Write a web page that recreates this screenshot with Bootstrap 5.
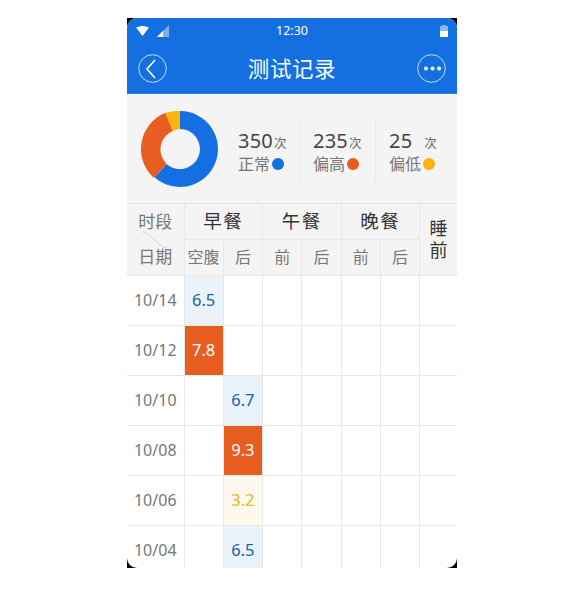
<!DOCTYPE html>
<html lang="zh">
<head>
  <meta charset="utf-8"/>
  <title>测试记录</title>
  <link href="https://cdn.jsdelivr.net/npm/bootstrap@5.3.0/dist/css/bootstrap.min.css" rel="stylesheet"/>
  <style>
    body { background: #fff; font-family: "Noto Sans", "Noto Sans CJK SC", sans-serif; color: #777; }
    .page-wrap { padding: 18px 0 0 127px; }
    .phone { width: 330px; height: 550px; background: #000; overflow: hidden; position: relative; }
    .phone-inner { height: 550px; background: #fff; border-radius: 10px; overflow: hidden; }
    .app-head { background: #1470e0; height: 76px; color: #fff; border-bottom: 1px solid #2a7fe6; }
    .status-bar { height: 26px; padding: 0 9px; }
    .status-side { width: 60px; }
    .status-time { font-size: 12.5px; }
    .title-bar { height: 50px; padding: 0 11px; }
    .title-text { font-size: 21.5px; letter-spacing: .6px; }
    .round-btn { width: 29px; height: 29px; margin-top: -1px; }
    .summary { height: 110px; background: #f4f4f4; border-bottom: 1px solid #e4e4e4; padding-left: 14px; }
    .stat { width: 76px; height: 64px; padding: 11px 0 0 13px; margin-top: 2px; }
    .stat-first { width: 61px; margin-left: 19px; padding-left: 0; }
    .stat-mid { border-left: 1px solid #ececec; }
    .stat-num { font-size: 20px; line-height: 24px; color: #444; letter-spacing: .2px; }
    .stat-unit { font-size: 12.5px; color: #666; margin-left: 1px; }
    .stat-gap { margin-left: 12px; }
    .stat-lab { font-size: 16px; line-height: 22px; color: #777; margin-top: -3px; }
    .dot-mark { width: 12px; height: 12px; border-radius: 50%; margin-left: 2px; }
    .c-blue { background: #1470e0; }
    .c-red { background: #e85d20; }
    .c-yellow { background: #fdb40a; }
    .log-table { table-layout: fixed; width: 330px; border-collapse: collapse; margin: 0; }
    .log-table td, .log-table th { border: 1px solid #e8e8e8; padding: 0; text-align: center; vertical-align: middle; font-weight: 400; }
    .log-table tr > :first-child { border-left: 0; }
    .log-table tr > :last-child { border-right: 0; }
    .log-table thead th { background: #f4f4f4; }
    .log-table thead tr:first-child th { border-top: 0; height: 35px; }
    .log-table thead tr:nth-child(2) th { height: 36px; font-size: 16px; color: #777; }
    .meal-head { font-size: 18.5px; color: #333; letter-spacing: 1.5px; }
    .sleep-head { font-size: 18px; line-height: 22px; color: #333; padding-bottom: 0 !important; }
    .corner-cell { position: relative; font-size: 17px; color: #777; }
    .corner-top { position: absolute; left: 0; right: 0; top: 6px; line-height: 24px; }
    .corner-bot { position: absolute; left: 0; right: 0; top: 41px; line-height: 24px; }
    .corner-line { position: absolute; left: 0; top: 0; }
    .log-table tbody td { height: 50px; font-size: 16.5px; color: #1b62a8; }
    .log-table tbody td:first-child { color: #777; font-size: 16px; }
    .cell-blue { background: #eaf2fa; }
    .cell-red { background: #e85d20; color: #fff !important; }
    .cell-yellow { background: #fdf9ee; color: #eeb524 !important; }
  </style>
</head>
<body>
  <div class="page-wrap">
    <div class="phone">
      <div class="phone-inner">

        <div class="app-head">
          <div class="status-bar d-flex align-items-center justify-content-between">
            <div class="status-side d-flex align-items-center gap-2">
              <svg width="13" height="10" viewBox="0 0 13 10"><path d="M0 1.500Q6.500-1.500 13 1.500L6.500 10z" fill="#fff"/></svg>
              <svg width="12" height="12" viewBox="0 0 12 12"><path d="M0 12L12 0V12z" fill="#fff" opacity=".45"/><path d="M0 12L6 6V12z" fill="#fff"/></svg>
            </div>
            <span class="status-time">12:30</span>
            <div class="status-side d-flex justify-content-end">
              <svg width="8" height="12" viewBox="0 0 8 12"><path d="M2 0H6V1H8V12H0V1H2z" fill="#fff" opacity=".5"/><path d="M0 6H8V12H0z" fill="#fff"/></svg>
            </div>
          </div>
          <div class="title-bar d-flex align-items-center justify-content-between">
            <svg class="round-btn" viewBox="0 0 29 29" fill="none" stroke="#fff"><circle cx="14.500" cy="14.500" r="13.800" opacity=".75"/><path d="M17 6L9 15L17 24" stroke-width="1.600"/></svg>
            <span class="title-text">测试记录</span>
            <svg class="round-btn" viewBox="0 0 29 29" fill="none" stroke="#fff"><circle cx="14.500" cy="14.500" r="13.800" opacity=".75"/><g fill="#fff" stroke="none"><circle cx="9" cy="14.500" r="2"/><circle cx="15.500" cy="14.500" r="2"/><circle cx="22" cy="14.500" r="2"/></g></svg>
          </div>
        </div>

        <div class="summary d-flex align-items-center">
          <svg class="flex-shrink-0" width="78" height="78" viewBox="-39 -39 78 78">
            <path d="M0-38A38 38 0 1 1-25.400 28.300L-13.400 14.900A20 20 0 1 0 0-20z" fill="#1470e0"/>
            <path d="M-26.100 29A39 39 0 0 1-14.500-36.200L-7.200-18A20 20 0 0 0-13.400 14.900z" fill="#e85d20"/>
            <path d="M-14.500-36.200A38 38 0 0 1 0-38V-20A20 20 0 0 0-7.200-18z" fill="#fdb40a"/>
          </svg>
          <div class="stat stat-first">
            <div class="stat-num">350<span class="stat-unit">次</span></div>
            <div class="stat-lab d-flex align-items-center">正常<span class="dot-mark c-blue"></span></div>
          </div>
          <div class="stat stat-mid">
            <div class="stat-num">235<span class="stat-unit">次</span></div>
            <div class="stat-lab d-flex align-items-center">偏高<span class="dot-mark c-red"></span></div>
          </div>
          <div class="stat stat-mid">
            <div class="stat-num">25<span class="stat-unit stat-gap">次</span></div>
            <div class="stat-lab d-flex align-items-center">偏低<span class="dot-mark c-yellow"></span></div>
          </div>
        </div>

        <table class="log-table">
          <colgroup>
            <col style="width:57px"><col style="width:39.250px"><col style="width:39.250px"><col style="width:39.250px"><col style="width:39.250px"><col style="width:39.250px"><col style="width:39.250px"><col style="width:37.500px">
          </colgroup>
          <thead>
            <tr>
              <th rowspan="2" class="corner-cell">
                <span class="corner-top">时段</span>
                <svg class="corner-line" width="57" height="71"><path d="M15 28H18L36 43H40" stroke="#d4d4d4" fill="none"/></svg>
                <span class="corner-bot">日期</span>
              </th>
              <th colspan="2" class="meal-head">早餐</th>
              <th colspan="2" class="meal-head">午餐</th>
              <th colspan="2" class="meal-head">晚餐</th>
              <th rowspan="2" class="sleep-head">睡<br>前</th>
            </tr>
            <tr><th>空腹</th><th>后</th><th>前</th><th>后</th><th>前</th><th>后</th></tr>
          </thead>
          <tbody>
            <tr><td>10/14</td><td class="cell-blue">6.5</td><td></td><td></td><td></td><td></td><td></td><td></td></tr>
            <tr><td>10/12</td><td class="cell-red">7.8</td><td></td><td></td><td></td><td></td><td></td><td></td></tr>
            <tr><td>10/10</td><td></td><td class="cell-blue">6.7</td><td></td><td></td><td></td><td></td><td></td></tr>
            <tr><td>10/08</td><td></td><td class="cell-red">9.3</td><td></td><td></td><td></td><td></td><td></td></tr>
            <tr><td>10/06</td><td></td><td class="cell-yellow">3.2</td><td></td><td></td><td></td><td></td><td></td></tr>
            <tr><td>10/04</td><td></td><td class="cell-blue">6.5</td><td></td><td></td><td></td><td></td><td></td></tr>
          </tbody>
        </table>

      </div>
    </div>
  </div>
  <script src="https://cdn.jsdelivr.net/npm/bootstrap@5.3.0/dist/js/bootstrap.bundle.min.js"></script>
</body>
</html>
